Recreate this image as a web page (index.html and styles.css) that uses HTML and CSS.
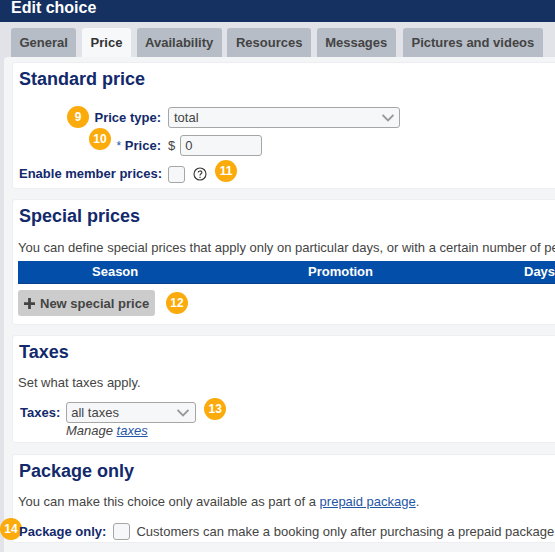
FILE: index.html
```html
<!DOCTYPE html>
<html lang="en">
<head>
<meta charset="utf-8">
<title>Edit choice</title>
<link rel="stylesheet" href="styles.css">
</head>
<body>
<div class="page">
  <header class="topbar">Edit choice</header>
  <nav class="tabs">
    <a class="tab">General</a>
    <a class="tab active">Price</a>
    <a class="tab">Availability</a>
    <a class="tab">Resources</a>
    <a class="tab">Messages</a>
    <a class="tab tab-last">Pictures and videos</a>
  </nav>
  <main class="panel">
    <section class="card card-standard">
      <h2>Standard price</h2>
      <div class="form-grid">
        <label class="lbl">Price type:</label>
        <div class="select select-type"><span>total</span><svg class="chev" viewBox="0 0 12 8"><path d="M.6 1 6 6.5 11.4 1"/></svg></div>
        <label class="lbl"><span class="req">*</span> Price:</label>
        <div class="price-field"><span class="cur">$</span><div class="input">0</div></div>
        <label class="lbl">Enable member prices:</label>
        <div class="member"><span class="check"></span>
          <svg class="help" viewBox="0 0 14 14"><circle cx="7" cy="7" r="6"/><path d="M5.2 5.6C5.2 3.4 8.9 3.4 8.9 5.4 8.9 6.8 7 6.7 7 8.4"/><path d="M7 9.7V11"/></svg>
        </div>
      </div>
      <span class="badge b9">9</span>
      <span class="badge b10">10</span>
      <span class="badge b11">11</span>
    </section>
    <section class="card card-special">
      <h2>Special prices</h2>
      <p class="desc">You can define special prices that apply only on particular days, or with a certain number of people.</p>
      <div class="thead"><span class="th-season">Season</span><span class="th-promo">Promotion</span><span class="th-days">Days</span></div>
      <div class="actions">
        <button class="btn"><svg class="plus" viewBox="0 0 12 12"><path d="M4.5 0h3v4.5H12v3H7.5V12h-3V7.5H0v-3h4.5z"/></svg>New special price</button>
        <span class="badge-inline">12</span>
      </div>
    </section>
    <section class="card card-taxes">
      <h2>Taxes</h2>
      <p class="desc">Set what taxes apply.</p>
      <div class="tax-row">
        <label class="lbl">Taxes:</label>
        <div class="select select-tax"><span>all taxes</span><svg class="chev" viewBox="0 0 12 8"><path d="M.6 1 6 6.5 11.4 1"/></svg></div>
        <span class="badge-inline">13</span>
      </div>
      <div class="manage">Manage <a href="#">taxes</a></div>
    </section>
    <section class="card card-package">
      <h2>Package only</h2>
      <p class="desc">You can make this choice only available as part of a <a href="#">prepaid package</a>.</p>
      <div class="pkg-row">
        <label class="lbl">Package only:</label>
        <span class="check"></span>
        <span class="pkg-text">Customers can make a booking only after purchasing a prepaid package</span>
      </div>
      <span class="badge b14">14</span>
    </section>
  </main>
</div>
</body>
</html>
```
FILE: styles.css
```css
* { box-sizing: border-box; }
html, body { margin: 0; padding: 0; height: 100%; overflow: hidden; background: #e1e3e8; }
body { font-family: "Liberation Sans", Arial, sans-serif; font-size: 13px; color: #444; }
.page { width: 555px; height: 552px; overflow: hidden; position: relative; }
.topbar { height: 22px; background: #153161; color: #fff; font-size: 16px; font-weight: bold; padding-left: 11px; line-height: 16px; }
.tabs { display: flex; gap: 5.7px; padding: 6px 0 0 11px; height: 35px; }
.tab { height: 29px; background: #b6bdc6; color: #444; font-weight: bold; font-size: 13px; line-height: 30px; padding: 0 8.5px; border-radius: 3px 3px 0 0; white-space: nowrap; }
.tab.active { background: #f7f8fa; color: #333; }
.tab-last { margin-left: 1.5px; }
.panel { margin-left: 4px; width: 700px; height: 495px; background: #f4f5f7; border-radius: 4px 0 0 0; padding: 5px 0 0 8px; }
.card { position: relative; background: #fff; border: 1px solid #eceef1; border-radius: 3px; padding: 6px 0 0 6px; margin-bottom: 10px; width: 692px; }
h2 { margin: 0; color: #12296b; font-size: 18px; font-weight: bold; line-height: 20px; }
.card-standard { height: 127px; }
.card-special { height: 126px; }
.card-taxes { height: 108px; margin-bottom: 11px; }
.card-package { height: 89px; margin-bottom: 0; }
.form-grid { display: grid; grid-template-columns: 142px auto; justify-content: start; column-gap: 7px; margin-top: 18px; grid-auto-rows: 28px; }
.lbl { position: relative; z-index: 1; color: #12296b; font-weight: bold; font-size: 13px; text-align: right; line-height: 21px; white-space: nowrap; }
.req { font-weight: normal; font-size: 12px; color: #1f56a5; }
.select { position: relative; height: 21px; border: 1px solid #a6a6a6; border-radius: 3px; background: #f6f7f9; padding-left: 5px; line-height: 19px; font-size: 13px; color: #444; }
.select-type { width: 232px; }
.select-tax { width: 130px; padding-left: 4px; }
.chev { position: absolute; right: 5px; top: 6px; width: 12px; height: 8px; fill: none; stroke: #999; stroke-width: 1.8; }
.select-tax .chev { right: 6px; }
.price-field { display: flex; align-items: center; height: 21px; gap: 5px; }
.cur { font-size: 13px; }
.input { width: 82px; height: 21px; border: 1px solid #a6a6a6; border-radius: 3px; background: #f6f7f9; padding-left: 4px; line-height: 19px; }
.member { display: flex; align-items: flex-start; gap: 8px; padding-top: 3px; }
.check { display: block; flex: none; width: 17px; height: 17px; border: 1px solid #a6a6a6; border-radius: 3px; background: #f6f7f9; }
.help { width: 14px; height: 14px; flex: none; margin-top: 1px; fill: none; stroke: #333; stroke-width: 1.1; }
.desc { margin: 0 0 0 -1px; font-size: 13px; color: #444; line-height: 16px; white-space: nowrap; }
.card-special .desc { margin-top: 14px; }
.thead { position: relative; height: 23px; margin: 5px 0 0 -1px; background: #034ea8; border-bottom: 1px solid #0a3f8c; color: #fff; font-weight: bold; font-size: 13px; line-height: 22px; }
.thead span { position: absolute; top: 0; }
.th-season { left: 74px; }
.th-promo { left: 290px; }
.th-days { left: 506px; }
.actions { display: flex; align-items: center; gap: 11px; margin: 6px 0 0 -1px; }
.btn { display: flex; align-items: center; gap: 5px; height: 26px; width: 137px; padding: 0 0 0 6px; border: 0; border-radius: 3px; background: #ccc; color: #444; font: bold 13px "Liberation Sans", Arial, sans-serif; white-space: nowrap; }
.plus { width: 11px; height: 11px; fill: #444; }
.card-taxes .desc { margin-top: 13px; }
.tax-row { display: flex; align-items: flex-start; gap: 7px; margin: 11px 0 0; }
.tax-row .lbl { margin-left: 1px; }
.tax-row .select { margin-left: -1px; }
.badge-inline, .badge { display: flex; align-items: center; justify-content: center; width: 22px; height: 22px; border-radius: 50%; background: #fbab0b; color: #fff; font-weight: bold; font-size: 12px; flex: none; }
.badge { position: absolute; }
.b9 { left: 54px; top: 43px; }
.b10 { left: 76px; top: 65px; }
.b11 { left: 202px; top: 97px; }
.b14 { left: -13px; top: 63px; }
.tax-row .badge-inline { margin-top: -4px; margin-left: 1px; }
.manage { font-style: italic; margin: 0 0 0 47px; font-size: 13px; line-height: 16px; }
a { color: #1f56a5; }
.card-package .desc { margin-top: 13px; }
.pkg-row { display: flex; align-items: center; margin-top: 13px; height: 17px; }
.pkg-row .check { margin-left: 7px; }
.pkg-text { margin-left: 6px; font-size: 13px; white-space: nowrap; }
```
